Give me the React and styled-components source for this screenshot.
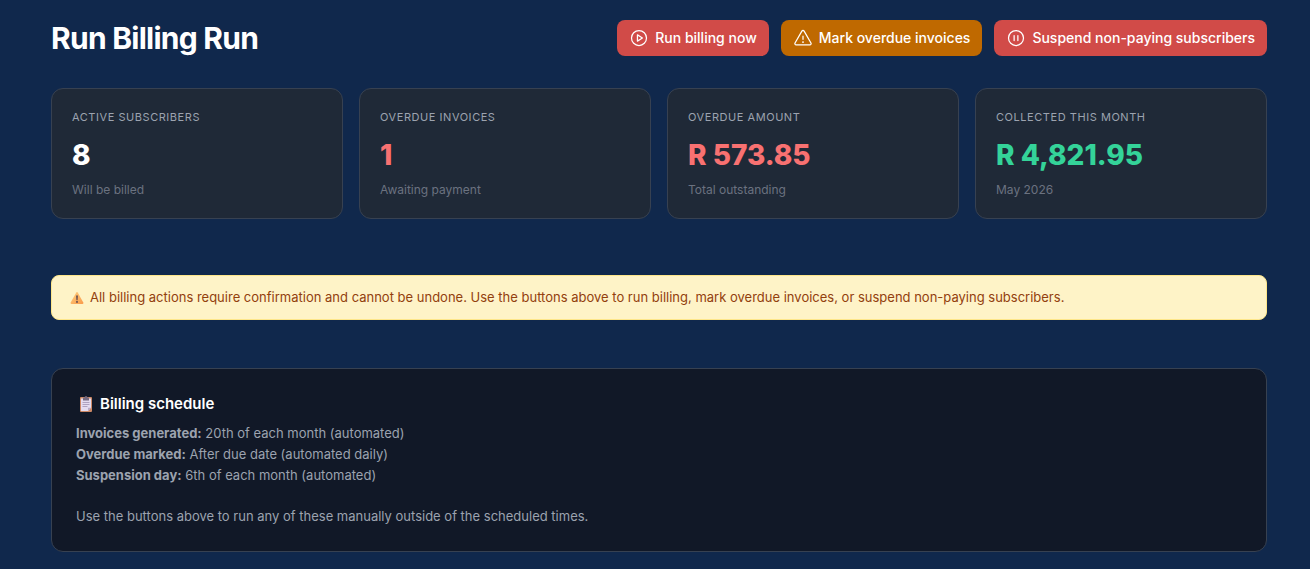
import styled, { createGlobalStyle } from "styled-components";
import { PiPlayCircle, PiWarning, PiPauseCircle } from "react-icons/pi";

const stats = [
  { label: "Active subscribers", value: "8", note: "Will be billed", color: "#ffffff" },
  { label: "Overdue invoices", value: "1", note: "Awaiting payment", color: "#f87171" },
  { label: "Overdue amount", value: "R 573.85", note: "Total outstanding", color: "#f87171" },
  { label: "Collected this month", value: "R 4,821.95", note: "May 2026", color: "#34d399" },
];

const schedule = [
  { name: "Invoices generated:", when: "20th of each month (automated)" },
  { name: "Overdue marked:", when: "After due date (automated daily)" },
  { name: "Suspension day:", when: "6th of each month (automated)" },
];

const WarningSign = () => (
  <svg width="18" height="14" viewBox="0 0 18 14" aria-hidden="true">
    <defs>
      <linearGradient id="sign" x1="0" y1="0" x2="1" y2="1">
        <stop offset="0" stopColor="#ffce7c" />
        <stop offset="1" stopColor="#f99a4b" />
      </linearGradient>
    </defs>
    <path d="M8.3 1.6Q9 .5 9.7 1.6L15.3 11.6Q15.8 13 14.6 13H3.4Q2.2 13 2.7 11.6Z" fill="url(#sign)" />
    <path d="M8.2 4.4h1.6l-.3 4.8h-1z" fill="#4a3b4d" />
    <circle cx="9" cy="10.9" r=".9" fill="#4a3b4d" />
  </svg>
);

const Clipboard = () => (
  <svg width="20" height="18" viewBox="0 0 20 18" aria-hidden="true">
    <rect x="4" y="2" width="12" height="15" rx="1" fill="#cd8966" />
    <path d="M5 3.5h10v9.3L12 16H5z" fill="#e4dcf0" />
    <path d="M12 16v-3.2h3z" fill="#b9adc9" />
    <path d="M7 5.5V3.2q0-.7.7-.7h.8q.2-1.5 1.5-1.5t1.5 1.5h.8q.7 0 .7.7v2.3z" fill="#75697f" />
    <path d="M6.5 7.5h7M6.5 9.5h7M6.5 11.5h5" stroke="#a79bb9" strokeWidth=".9" />
  </svg>
);

const App = () => {
  return (
    <>
      <GlobalStyle />
      <Page>
        <Header>
          <Title>Run Billing Run</Title>
          <Actions>
            <ActionButton type="button" $color="#d14b48">
              <PiPlayCircle />
              Run billing now
            </ActionButton>
            <ActionButton type="button" $color="#bf6900">
              <PiWarning />
              Mark overdue invoices
            </ActionButton>
            <ActionButton type="button" $color="#d14b48">
              <PiPauseCircle />
              Suspend non-paying subscribers
            </ActionButton>
          </Actions>
        </Header>

        <Stats>
          {stats.map((stat) => (
            <StatCard key={stat.label}>
              <StatLabel>{stat.label}</StatLabel>
              <StatValue $color={stat.color}>{stat.value}</StatValue>
              <StatNote>{stat.note}</StatNote>
            </StatCard>
          ))}
        </Stats>

        <Notice>
          <WarningSign />
          <span>
            All billing actions require confirmation and cannot be undone. Use the buttons above to
            run billing, mark overdue invoices, or suspend non-paying subscribers.
          </span>
        </Notice>

        <Schedule>
          <ScheduleTitle>
            <Clipboard />
            Billing schedule
          </ScheduleTitle>
          {schedule.map((item) => (
            <ScheduleText key={item.name}>
              <strong>{item.name}</strong> {item.when}
            </ScheduleText>
          ))}
          <ScheduleHint>
            Use the buttons above to run any of these manually outside of the scheduled times.
          </ScheduleHint>
        </Schedule>
      </Page>
    </>
  );
};

const GlobalStyle = createGlobalStyle`
  * {
    box-sizing: border-box;
    margin: 0;
  }
  body {
    background: #10284c;
    color: #ffffff;
    font-family: Inter, "Liberation Sans", sans-serif;
  }
`;

const Page = styled.main`
  display: flex;
  flex-direction: column;
  padding: 20px 43px 17px 51px;
`;

const Header = styled.header`
  display: flex;
  align-items: center;
  justify-content: space-between;
  flex-wrap: wrap;
  gap: 12px;
`;

const Title = styled.h1`
  font-size: 30px;
  line-height: 36px;
  font-weight: 700;
  letter-spacing: -0.025em;
`;

const Actions = styled.div`
  display: flex;
  flex-wrap: wrap;
  gap: 12px;
`;

const ActionButton = styled.button`
  display: flex;
  align-items: center;
  gap: 6px;
  padding: 8px 12px;
  border: 0;
  border-radius: 8px;
  background: ${(props) => props.$color};
  color: #ffffff;
  font-family: inherit;
  font-size: 14px;
  line-height: 20px;
  font-weight: 500;
  cursor: pointer;

  svg {
    width: 20px;
    height: 20px;
  }
`;

const Stats = styled.section`
  display: grid;
  grid-template-columns: repeat(auto-fit, minmax(240px, 1fr));
  gap: 16px;
  margin-top: 32px;
`;

const StatCard = styled.article`
  padding: 20px;
  border: 1px solid #374151;
  border-radius: 12px;
  background: #1f2937;
`;

const StatLabel = styled.h2`
  color: #9ca3af;
  font-size: 11px;
  line-height: 16px;
  font-weight: 400;
  letter-spacing: 0.05em;
  text-transform: uppercase;
`;

const StatValue = styled.p`
  margin: 8px 0 4px;
  color: ${(props) => props.$color};
  font-size: 28px;
  line-height: 44px;
  font-weight: 800;
`;

const StatNote = styled.p`
  color: #6b7280;
  font-size: 12px;
  line-height: 17px;
`;

const Notice = styled.div`
  display: flex;
  align-items: center;
  gap: 4px;
  margin-top: 56px;
  padding: 12px 16px;
  border: 1px solid #fde68a;
  border-radius: 8px;
  background: #fef3c7;
  color: #92400e;
  font-size: 13px;
  line-height: 19px;
`;

const Schedule = styled.section`
  margin-top: 48px;
  padding: 24px;
  border: 1px solid #374151;
  border-radius: 12px;
  background: #111827;
`;

const ScheduleTitle = styled.h2`
  display: flex;
  align-items: center;
  gap: 4px;
  margin-bottom: 8px;
  font-size: 15px;
  line-height: 22px;
  font-weight: 600;
`;

const ScheduleText = styled.p`
  color: #9ca3af;
  font-size: 13px;
  line-height: 21px;
`;

const ScheduleHint = styled(ScheduleText)`
  margin-top: 20px;
`;

export default App;
